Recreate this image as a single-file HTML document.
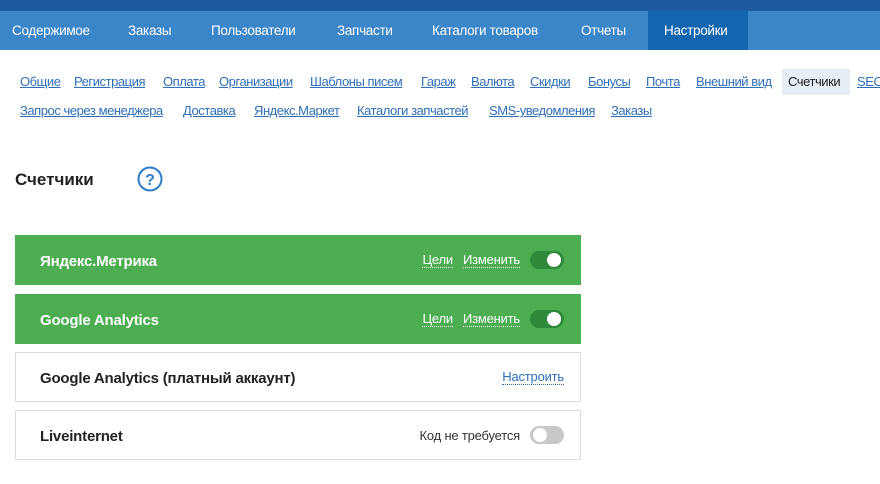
<!DOCTYPE html>
<html><head><meta charset="utf-8"><style>
*{margin:0;padding:0;box-sizing:border-box}
body{width:880px;height:484px;background:#fff;font-family:"Liberation Sans",sans-serif;position:relative;overflow:hidden}
.top{position:absolute;left:0;top:0;width:880px;height:11px;background:#1b5aa0}
.nav{position:absolute;left:0;top:11px;width:880px;height:39px;background:#3b86c9}
.nav span{position:absolute;top:0;line-height:40px;color:#fff;font-size:13.5px;letter-spacing:-0.3px}
.act{position:absolute;left:648px;top:11px;width:100px;height:39px;background:#1465b0}
.l{position:absolute;font-size:13px;letter-spacing:-0.45px;color:#2e6fb8;text-decoration:underline;white-space:nowrap}
.sel{position:absolute;left:782px;top:69px;width:68px;height:26px;background:#e6eef6}
h1{position:absolute;left:15px;top:170px;font-size:17px;font-weight:bold;color:#222}
.card{position:absolute;left:15px;width:566px;height:50px;border:1px solid #dcdcdc;background:#fff}
.card.g{background:#4cae50;border-color:#4cae50}
.card .t{position:absolute;left:24px;top:2px;line-height:48px;font-size:15px;font-weight:bold;color:#222;letter-spacing:-0.2px}
.card.g .t{color:#fff}
.r{position:absolute;right:16px;top:0;height:48px;display:flex;align-items:center;gap:10px;font-size:13px;letter-spacing:-0.2px}
.dl{color:#fff;border-bottom:1px dotted #fff;line-height:15px}
.bl{color:#2e6fb8;border-bottom:1px dotted #2e6fb8;line-height:15px}
.tg{width:34px;height:18px;border-radius:9px;background:#2e8a3a;position:relative}
.tg::after{content:"";position:absolute;right:3px;top:2px;width:14px;height:14px;border-radius:50%;background:#fff}
.tg.off{background:#c8c8c8}
.tg.off::after{left:3px;right:auto}
</style></head><body>
<div class="top"></div><div class="nav"></div><div class="act"></div>
<div class="nav" style="background:none">
<span style="left:12px">Содержимое</span><span style="left:128px">Заказы</span><span style="left:211px">Пользователи</span><span style="left:337px">Запчасти</span><span style="left:432px">Каталоги товаров</span><span style="left:581px">Отчеты</span><span style="left:664px">Настройки</span>
</div>
<div class="sel"></div>
<div style="position:absolute;top:74px">
<span class="l" style="left:20px">Общие</span><span class="l" style="left:74px">Регистрация</span><span class="l" style="left:163px">Оплата</span><span class="l" style="left:219px">Организации</span><span class="l" style="left:310px">Шаблоны писем</span><span class="l" style="left:421px">Гараж</span><span class="l" style="left:471px">Валюта</span><span class="l" style="left:530px">Скидки</span><span class="l" style="left:588px">Бонусы</span><span class="l" style="left:646px">Почта</span><span class="l" style="left:696px">Внешний вид</span><span class="l" style="left:788px;color:#222;text-decoration:none">Счетчики</span><span class="l" style="left:857px">SEO</span>
</div>
<div style="position:absolute;top:103px">
<span class="l" style="left:20px">Запрос через менеджера</span><span class="l" style="left:183px">Доставка</span><span class="l" style="left:254px">Яндекс.Маркет</span><span class="l" style="left:357px">Каталоги запчастей</span><span class="l" style="left:489px">SMS-уведомления</span><span class="l" style="left:611px">Заказы</span>
</div>
<h1>Счетчики</h1>
<svg style="position:absolute;left:137px;top:166px" width="26" height="26" viewBox="0 0 26 26"><circle cx="13" cy="13" r="11.5" fill="none" stroke="#2e7bc8" stroke-width="2"/><text x="13" y="19" text-anchor="middle" font-family="Liberation Sans" font-weight="bold" font-size="16" fill="#2e7bc8">?</text></svg>
<div class="card g" style="top:235px"><div class="t">Яндекс.Метрика</div><div class="r"><span class="dl">Цели</span><span class="dl">Изменить</span><div class="tg"></div></div></div>
<div class="card g" style="top:294px"><div class="t">Google Analytics</div><div class="r"><span class="dl">Цели</span><span class="dl">Изменить</span><div class="tg"></div></div></div>
<div class="card" style="top:352px"><div class="t">Google Analytics (платный аккаунт)</div><div class="r"><span class="bl">Настроить</span></div></div>
<div class="card" style="top:410px"><div class="t">Liveinternet</div><div class="r"><span style="color:#333">Код не требуется</span><div class="tg off"></div></div></div>
</body></html>
